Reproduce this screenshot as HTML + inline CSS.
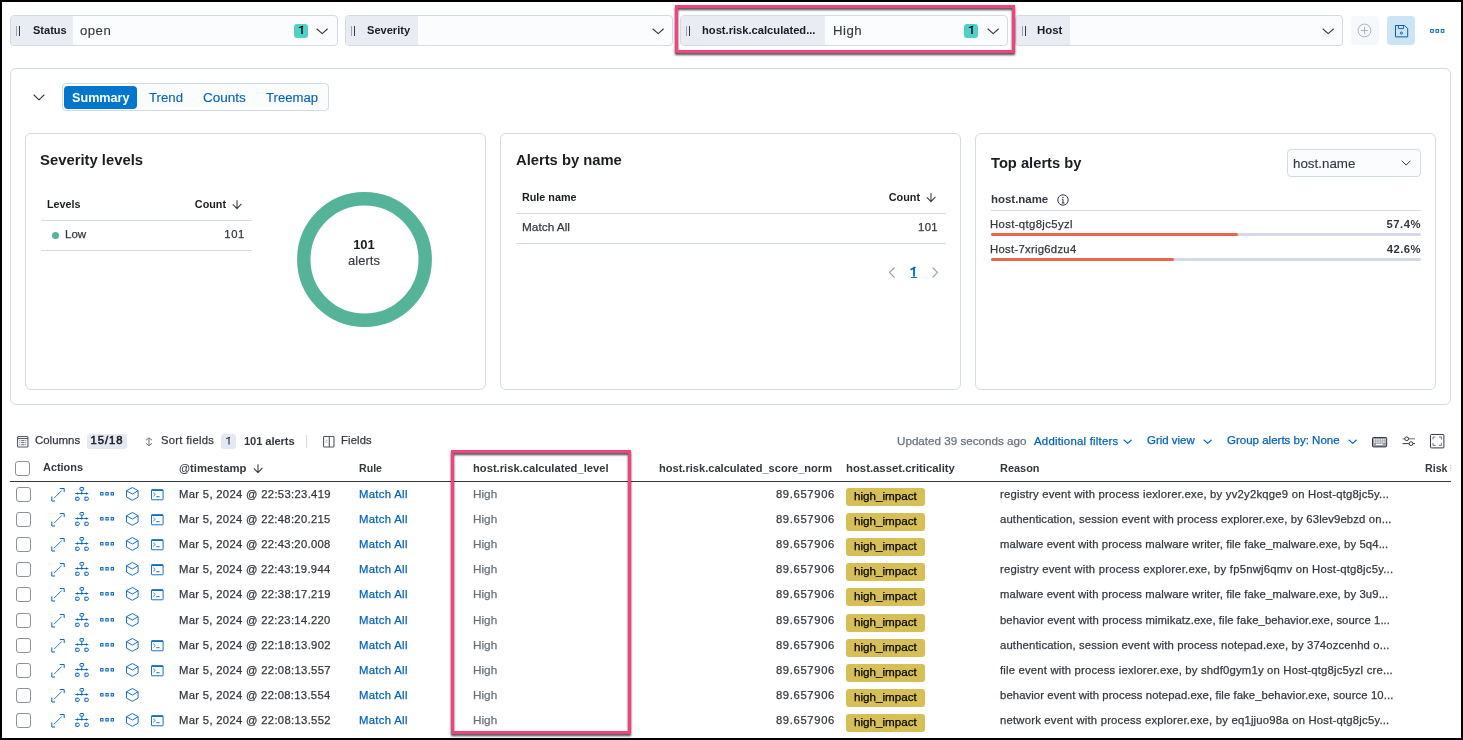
<!DOCTYPE html>
<html><head><meta charset="utf-8"><style>
html,body{margin:0;padding:0;}
body{width:1463px;height:740px;background:#000;position:relative;overflow:hidden;font-family:"Liberation Sans", sans-serif;}
.t{position:absolute;white-space:nowrap;will-change:transform;}
.a{position:absolute;}
svg.a{overflow:visible;}
</style></head><body>
<div style="position:absolute;left:2px;top:2px;width:1459px;height:735.6px;background:#fff"></div>
<div class="a" style="left:10px;top:15px;width:328px;height:31px;background:#fbfcfd;border:1px solid #d3dae6;box-sizing:border-box;border-radius:4px;"></div>
<div class="a" style="left:11px;top:16px;width:62px;height:29px;background:#e9edf3;border-radius:3px 0 0 3px;"></div>
<div class="a" style="left:16.3px;top:26px;width:1px;height:10px;background:#98a2b3;"></div>
<div class="a" style="left:19.3px;top:26px;width:1px;height:10px;background:#343741;"></div>
<div class="t" style="top:24.00px;font-size:11.067px;line-height:13.28px;font-weight:700;color:#1a1c21;left:32.58px;">Status</div>
<div class="t" style="top:23.00px;font-size:13.2px;line-height:15.84px;font-weight:400;color:#343741;-webkit-text-stroke:0.125px #343741;letter-spacing:0.468px;left:80.27px;">open</div>
<div class="a" style="left:294px;top:24px;width:14px;height:14px;background:#4fd1c8;border-radius:3px;"></div>
<svg class="a" style="left:296.9px;top:25.2px;" width="10" height="9.900000000000002" viewBox="0 0 10 9.900000000000002"><path d="M5 1V8.900000000000002" stroke="#000" stroke-width="1.35" stroke-linecap="butt"/><path d="M5.675 1.4L2.3 2.5" stroke="#000" stroke-width="1.215" stroke-linecap="round"/></svg>
<svg class="a" style="left:315.05px;top:26.599999999999998px;" width="14.4" height="8.6" viewBox="0 0 14.4 8.6"><path d="M2 2 L7.2 6.6 L12.4 2" fill="none" stroke="#343741" stroke-width="1.1" stroke-linecap="round" stroke-linejoin="round"/></svg>
<div class="a" style="left:345px;top:15px;width:327.70000000000005px;height:31px;background:#fbfcfd;border:1px solid #d3dae6;box-sizing:border-box;border-radius:4px;"></div>
<div class="a" style="left:346px;top:16px;width:72px;height:29px;background:#e9edf3;border-radius:3px 0 0 3px;"></div>
<div class="a" style="left:351.3px;top:26px;width:1px;height:10px;background:#98a2b3;"></div>
<div class="a" style="left:354.3px;top:26px;width:1px;height:10px;background:#343741;"></div>
<div class="t" style="top:24.00px;font-size:11.095px;line-height:13.31px;font-weight:700;color:#1a1c21;left:367.08px;">Severity</div>
<svg class="a" style="left:651.05px;top:26.599999999999998px;" width="14.4" height="8.6" viewBox="0 0 14.4 8.6"><path d="M2 2 L7.2 6.6 L12.4 2" fill="none" stroke="#343741" stroke-width="1.1" stroke-linecap="round" stroke-linejoin="round"/></svg>
<div class="a" style="left:680px;top:15px;width:327.70000000000005px;height:31px;background:#fbfcfd;border:1px solid #d3dae6;box-sizing:border-box;border-radius:4px;"></div>
<div class="a" style="left:681px;top:16px;width:144.39999999999998px;height:29px;background:#e9edf3;border-radius:3px 0 0 3px;"></div>
<div class="a" style="left:686.3px;top:26px;width:1px;height:10px;background:#98a2b3;"></div>
<div class="a" style="left:689.3px;top:26px;width:1px;height:10px;background:#343741;"></div>
<div class="t" style="top:24.00px;font-size:11.162px;line-height:13.39px;font-weight:700;color:#1a1c21;left:701.73px;">host.risk.calculated...</div>
<div class="t" style="top:23.00px;font-size:13.2px;line-height:15.84px;font-weight:400;color:#343741;-webkit-text-stroke:0.125px #343741;letter-spacing:0.483px;left:832.54px;">High</div>
<div class="a" style="left:964px;top:24px;width:14px;height:14px;background:#4fd1c8;border-radius:3px;"></div>
<svg class="a" style="left:966.9px;top:25.2px;" width="10" height="9.900000000000002" viewBox="0 0 10 9.900000000000002"><path d="M5 1V8.900000000000002" stroke="#000" stroke-width="1.35" stroke-linecap="butt"/><path d="M5.675 1.4L2.3 2.5" stroke="#000" stroke-width="1.215" stroke-linecap="round"/></svg>
<svg class="a" style="left:986.0px;top:26.599999999999998px;" width="14.4" height="8.6" viewBox="0 0 14.4 8.6"><path d="M2 2 L7.2 6.6 L12.4 2" fill="none" stroke="#343741" stroke-width="1.1" stroke-linecap="round" stroke-linejoin="round"/></svg>
<div class="a" style="left:1015.4px;top:15px;width:327.6px;height:31px;background:#fbfcfd;border:1px solid #d3dae6;box-sizing:border-box;border-radius:4px;"></div>
<div class="a" style="left:1016.4px;top:16px;width:53.60000000000002px;height:29px;background:#e9edf3;border-radius:3px 0 0 3px;"></div>
<div class="a" style="left:1021.6999999999999px;top:26px;width:1px;height:10px;background:#98a2b3;"></div>
<div class="a" style="left:1024.6999999999998px;top:26px;width:1px;height:10px;background:#343741;"></div>
<div class="t" style="top:24.00px;font-size:11.44px;line-height:13.73px;font-weight:700;color:#1a1c21;left:1037.21px;">Host</div>
<svg class="a" style="left:1320.5px;top:26.599999999999998px;" width="14.4" height="8.6" viewBox="0 0 14.4 8.6"><path d="M2 2 L7.2 6.6 L12.4 2" fill="none" stroke="#343741" stroke-width="1.1" stroke-linecap="round" stroke-linejoin="round"/></svg>
<div class="a" style="left:1351px;top:16px;width:28px;height:28.5px;background:#f7f8fc;border-radius:4px;"></div>
<svg class="a" style="left:1357.2px;top:23.2px;" width="15" height="15" viewBox="0 0 15 15"><circle cx="7.5" cy="7.5" r="6.4" fill="none" stroke="#a2abba" stroke-width="0.9"/><path d="M7.5 3.9V11.1M3.9 7.5H11.1" stroke="#a2abba" stroke-width="0.9"/></svg>
<div class="a" style="left:1387px;top:16px;width:28px;height:28.5px;background:#cce4f5;border-radius:4px;"></div>
<svg class="a" style="left:1395px;top:25px;" width="13.2" height="12.4" viewBox="0 0 13.2 12.4"><path d="M0.5 0.5H9.6L12.7 3.6V11.9H0.5Z" fill="none" stroke="#0061a6" stroke-width="1" stroke-linejoin="round"/><path d="M3.4 0.5V3.6H8.6V0.5" fill="none" stroke="#0061a6" stroke-width="0.9"/><circle cx="6.4" cy="8.1" r="1.1" fill="none" stroke="#0061a6" stroke-width="0.9"/></svg>
<svg class="a" style="left:1429.6px;top:29.1px;" width="14.5" height="3.9" viewBox="0 0 14.5 3.9"><rect x="0.6" y="0.6" width="2.7" height="2.7" fill="none" stroke="#0061a6" stroke-width="0.95"/><rect x="5.8999999999999995" y="0.6" width="2.7" height="2.7" fill="none" stroke="#0061a6" stroke-width="0.95"/><rect x="11.2" y="0.6" width="2.7" height="2.7" fill="none" stroke="#0061a6" stroke-width="0.95"/></svg>
<div class="a" style="left:10px;top:68px;width:1441px;height:337px;background:#fff;border:1px solid #d3dae6;box-sizing:border-box;border-radius:6px;"></div>
<svg class="a" style="left:32.3px;top:92.6px;" width="14" height="8.8" viewBox="0 0 14 8.8"><path d="M2 2 L7.0 6.8 L12 2" fill="none" stroke="#343741" stroke-width="1.1" stroke-linecap="round" stroke-linejoin="round"/></svg>
<div class="a" style="left:61.5px;top:83.2px;width:267.4px;height:28.3px;background:#fbfcfd;border:1px solid #d3dae6;box-sizing:border-box;border-radius:4px;"></div>
<div class="a" style="left:64.2px;top:86.1px;width:72.8px;height:22.8px;background:#0077cc;border-radius:4px;"></div>
<div class="t" style="top:91.00px;font-size:12.639px;line-height:15.17px;font-weight:700;color:#fff;left:71.65px;">Summary</div>
<div class="t" style="top:90.00px;font-size:13.205px;line-height:15.85px;font-weight:400;color:#0062bd;-webkit-text-stroke:0.125px #0062bd;left:149.34px;">Trend</div>
<div class="t" style="top:90.00px;font-size:13.534px;line-height:16.24px;font-weight:400;color:#0062bd;-webkit-text-stroke:0.125px #0062bd;left:202.82px;">Counts</div>
<div class="t" style="top:90.00px;font-size:13.126px;line-height:15.75px;font-weight:400;color:#0062bd;-webkit-text-stroke:0.125px #0062bd;left:266.44px;">Treemap</div>
<div class="a" style="left:25px;top:133px;width:460.5px;height:256.5px;background:#fff;border:1px solid #d3dae6;box-sizing:border-box;border-radius:6px;"></div>
<div class="a" style="left:500px;top:133px;width:460.5px;height:256.5px;background:#fff;border:1px solid #d3dae6;box-sizing:border-box;border-radius:6px;"></div>
<div class="a" style="left:975px;top:133px;width:460.5px;height:256.5px;background:#fff;border:1px solid #d3dae6;box-sizing:border-box;border-radius:6px;"></div>
<div class="t" style="top:152.00px;font-size:14.84px;line-height:17.81px;font-weight:700;color:#1a1c21;left:40.40px;">Severity levels</div>
<div class="t" style="top:198.00px;font-size:10.772px;line-height:12.93px;font-weight:700;color:#1a1c21;left:47.45px;">Levels</div>
<div class="t" style="top:198.00px;font-size:10.792px;line-height:12.95px;font-weight:700;color:#1a1c21;left:-773.57px;width:1000px;text-align:right;">Count</div>
<svg class="a" style="left:231.7px;top:199.5px;" width="10" height="10" viewBox="0 0 10 10"><path d="M5 0.3V8.4M0.8 4.4L5 8.6L9.4 3.9" fill="none" stroke="#343741" stroke-width="1.05" stroke-linejoin="round"/></svg>
<div class="a" style="left:41px;top:220px;width:211px;height:1px;background:#d3dae6;"></div>
<div class="a" style="left:51.6px;top:231.5px;width:7.2px;height:7.2px;background:#54b399;border-radius:4px;"></div>
<div class="t" style="top:228.00px;font-size:11.576px;line-height:13.89px;font-weight:400;color:#343741;-webkit-text-stroke:0.25px #343741;left:65.07px;">Low</div>
<div class="t" style="top:228.00px;font-size:11.3px;line-height:13.56px;font-weight:400;color:#343741;-webkit-text-stroke:0.25px #343741;letter-spacing:0.629px;left:-755.35px;width:1000px;text-align:right;">101</div>
<div class="a" style="left:41px;top:250px;width:211px;height:1px;background:#d3dae6;"></div>
<svg class="a" style="left:297px;top:192.4px;" width="135" height="135" viewBox="0 0 135 135"><circle cx="67.5" cy="67.5" r="60.7" fill="none" stroke="#54b399" stroke-width="13.4"/></svg>
<div class="t" style="top:237.00px;font-size:13px;line-height:15.6px;font-weight:700;color:#1a1c21;left:-135.60000000000002px;width:1000px;text-align:center;">101</div>
<div class="t" style="top:253.00px;font-size:13px;line-height:15.6px;font-weight:400;color:#343741;-webkit-text-stroke:0.125px #343741;left:-135.60000000000002px;width:1000px;text-align:center;">alerts</div>
<div class="t" style="top:152.00px;font-size:14.768px;line-height:17.72px;font-weight:700;color:#1a1c21;left:515.90px;">Alerts by name</div>
<div class="t" style="top:191.00px;font-size:10.783px;line-height:12.94px;font-weight:700;color:#1a1c21;left:522.45px;">Rule name</div>
<div class="t" style="top:191.00px;font-size:10.827px;line-height:12.99px;font-weight:700;color:#1a1c21;left:-80.17px;width:1000px;text-align:right;">Count</div>
<svg class="a" style="left:926px;top:192.8px;" width="10" height="10" viewBox="0 0 10 10"><path d="M5 0.3V8.4M0.8 4.4L5 8.6L9.4 3.9" fill="none" stroke="#343741" stroke-width="1.05" stroke-linejoin="round"/></svg>
<div class="a" style="left:516px;top:213px;width:430px;height:1px;background:#d3dae6;"></div>
<div class="t" style="top:220.00px;font-size:11.838px;line-height:14.21px;font-weight:400;color:#343741;-webkit-text-stroke:0.25px #343741;left:522.05px;">Match All</div>
<div class="t" style="top:221.00px;font-size:11.3px;line-height:13.56px;font-weight:400;color:#343741;-webkit-text-stroke:0.25px #343741;letter-spacing:0.379px;left:-62.10px;width:1000px;text-align:right;">101</div>
<div class="a" style="left:516px;top:243px;width:430px;height:1px;background:#d3dae6;"></div>
<svg class="a" style="left:887px;top:266px;" width="10" height="13" viewBox="0 0 10 13"><path d="M7.5 1.5L2.5 6.5L7.5 11.5" fill="none" stroke="#98a2b3" stroke-width="1.1"/></svg>
<svg class="a" style="left:909.1px;top:265.6px;" width="10" height="11.599999999999966" viewBox="0 0 10 11.599999999999966"><path d="M5 1V10.599999999999966" stroke="#0a6ec6" stroke-width="1.9" stroke-linecap="butt"/><path d="M5.95 1.4L2.0 3.4" stroke="#0a6ec6" stroke-width="1.71" stroke-linecap="round"/></svg>
<div class="a" style="left:910.8px;top:277px;width:6.2px;height:1.1px;background:#0a6ec6;"></div>
<svg class="a" style="left:930px;top:266px;" width="10" height="13" viewBox="0 0 10 13"><path d="M2.5 1.5L7.5 6.5L2.5 11.5" fill="none" stroke="#98a2b3" stroke-width="1.1"/></svg>
<div class="t" style="top:155.00px;font-size:14.715px;line-height:17.66px;font-weight:700;color:#1a1c21;left:991.05px;">Top alerts by</div>
<div class="a" style="left:1286.5px;top:149.2px;width:134.3px;height:28.3px;background:#fbfcfd;border:1px solid #d3dae6;box-sizing:border-box;border-radius:4px;"></div>
<div class="t" style="top:156.00px;font-size:13.36px;line-height:16.03px;font-weight:400;color:#343741;-webkit-text-stroke:0.125px #343741;left:1292.50px;">host.name</div>
<svg class="a" style="left:1400.2px;top:159.14999999999998px;" width="12.2" height="8.1" viewBox="0 0 12.2 8.1"><path d="M2 2 L6.1 6.1 L10.2 2" fill="none" stroke="#343741" stroke-width="1.0" stroke-linecap="round" stroke-linejoin="round"/></svg>
<div class="t" style="top:193.00px;font-size:11.455px;line-height:13.75px;font-weight:700;color:#343741;left:990.51px;">host.name</div>
<svg class="a" style="left:1056.5px;top:193.5px;" width="12" height="12" viewBox="0 0 12 12"><circle cx="6" cy="6" r="5.2" fill="none" stroke="#343741" stroke-width="1"/><path d="M6 5.2V9M4.8 9H7.4M4.9 5.2H6" fill="none" stroke="#343741" stroke-width="1"/><circle cx="6" cy="3.4" r="0.7" fill="#343741"/></svg>
<div class="a" style="left:991px;top:210px;width:429.8px;height:1px;background:#d3dae6;"></div>
<div class="t" style="top:218.00px;font-size:11.3px;line-height:13.56px;font-weight:400;color:#343741;-webkit-text-stroke:0.25px #343741;letter-spacing:0.376px;left:990.30px;">Host-qtg8jc5yzl</div>
<div class="t" style="top:218.00px;font-size:11.3px;line-height:13.56px;font-weight:700;color:#343741;letter-spacing:0.479px;left:420.70px;width:1000px;text-align:right;">57.4%</div>
<div class="a" style="left:991px;top:232.8px;width:429.8px;height:3.2px;background:#d3dae6;border-radius:2px;"></div>
<div class="a" style="left:991px;top:232.8px;width:247px;height:3.2px;background:#e7664c;border-radius:2px;"></div>
<div class="t" style="top:243.00px;font-size:11.3px;line-height:13.56px;font-weight:400;color:#343741;-webkit-text-stroke:0.25px #343741;letter-spacing:0.28px;left:990.30px;">Host-7xrig6dzu4</div>
<div class="t" style="top:243.00px;font-size:11.3px;line-height:13.56px;font-weight:700;color:#343741;letter-spacing:0.422px;left:420.64px;width:1000px;text-align:right;">42.6%</div>
<div class="a" style="left:991px;top:257.9px;width:429.8px;height:3.2px;background:#d3dae6;border-radius:2px;"></div>
<div class="a" style="left:991px;top:257.9px;width:183px;height:3.2px;background:#e7664c;border-radius:2px;"></div>
<svg class="a" style="left:16.7px;top:435.8px;" width="11.5" height="11.5" viewBox="0 0 11.5 11.5"><rect x="0.55" y="0.55" width="10.4" height="10.4" rx="1" fill="none" stroke="#535966" stroke-width="1.1"/><path d="M0.5 2.5H11" stroke="#535966" stroke-width="1.1"/><path d="M2.4 4.6H9.2M2.4 6.6H9.2M2.4 8.7H9.2" stroke="#535966" stroke-width="0.9" stroke-dasharray="0.9 0.9 3.2 0.9"/></svg>
<div class="t" style="top:434.00px;font-size:11.459px;line-height:13.75px;font-weight:400;color:#343741;-webkit-text-stroke:0.25px #343741;left:35.13px;">Columns</div>
<div class="a" style="left:87.3px;top:433.9px;width:39.4px;height:14.7px;background:#e3e8f2;border-radius:3px;"></div>
<div class="t" style="top:434.00px;font-size:11.2px;line-height:13.44px;font-weight:400;color:#1a1c21;-webkit-text-stroke:0.55px #1a1c21;letter-spacing:1.015px;left:-393px;width:1000px;text-align:center;">15/18</div>
<svg class="a" style="left:144.5px;top:436.8px;" width="8" height="9.5" viewBox="0 0 8 9.5"><path d="M1 3.2L4 0.8L7 3.2M1 6.3L4 8.7L7 6.3M4 1.2V8.3" fill="none" stroke="#69707d" stroke-width="1"/></svg>
<div class="t" style="top:434.00px;font-size:11.2px;line-height:13.44px;font-weight:400;color:#343741;-webkit-text-stroke:0.25px #343741;letter-spacing:0.309px;left:161.15px;">Sort fields</div>
<div class="a" style="left:221.4px;top:433.9px;width:14.2px;height:14.7px;background:#e3e8f2;border-radius:3px;"></div>
<svg class="a" style="left:224px;top:436.3px;" width="10" height="9.5" viewBox="0 0 10 9.5"><path d="M5 1V8.5" stroke="#343741" stroke-width="1.15" stroke-linecap="butt"/><path d="M5.575 1.4L2.6 2.5" stroke="#343741" stroke-width="1.035" stroke-linecap="round"/></svg>
<div class="t" style="top:435.00px;font-size:11.2px;line-height:13.44px;font-weight:700;color:#343741;letter-spacing:-0.112px;left:244.13px;">101 alerts</div>
<div class="a" style="left:306px;top:435px;width:1px;height:13px;background:#d3dae6;"></div>
<svg class="a" style="left:322.7px;top:435.8px;" width="11.5" height="11.5" viewBox="0 0 11.5 11.5"><rect x="0.55" y="0.55" width="10.4" height="10.4" rx="0.8" fill="none" stroke="#535966" stroke-width="1.1"/><path d="M6.3 0.5V11" stroke="#535966" stroke-width="1.1"/><path d="M2.5 4.3H4.6M2.5 6.3H4.6" stroke="#a0a5ad" stroke-width="0.8"/></svg>
<div class="t" style="top:434.00px;font-size:11.2px;line-height:13.44px;font-weight:400;color:#343741;-webkit-text-stroke:0.25px #343741;letter-spacing:0.171px;left:340.60px;">Fields</div>
<div class="t" style="top:434.00px;font-size:11.658px;line-height:13.99px;font-weight:400;color:#69707d;-webkit-text-stroke:0.25px #69707d;left:896.98px;">Updated 39 seconds ago</div>
<div class="t" style="top:435.00px;font-size:11.4px;line-height:13.68px;font-weight:400;color:#0062bd;-webkit-text-stroke:0.25px #0062bd;letter-spacing:0.228px;left:1034.00px;">Additional filters</div>
<svg class="a" style="left:1121.6px;top:438.1px;" width="11.4" height="7.4" viewBox="0 0 11.4 7.4"><path d="M2 2 L5.7 5.4 L9.4 2" fill="none" stroke="#0062bd" stroke-width="1.05" stroke-linecap="round" stroke-linejoin="round"/></svg>
<div class="t" style="top:434.00px;font-size:11.442px;line-height:13.73px;font-weight:400;color:#0062bd;-webkit-text-stroke:0.25px #0062bd;left:1146.73px;">Grid view</div>
<svg class="a" style="left:1201.5px;top:437.8px;" width="11.4" height="7.4" viewBox="0 0 11.4 7.4"><path d="M2 2 L5.7 5.4 L9.4 2" fill="none" stroke="#0062bd" stroke-width="1.05" stroke-linecap="round" stroke-linejoin="round"/></svg>
<div class="t" style="top:434.00px;font-size:11.52px;line-height:13.82px;font-weight:400;color:#0062bd;-webkit-text-stroke:0.25px #0062bd;left:1227.12px;">Group alerts by: None</div>
<svg class="a" style="left:1346.8px;top:437.8px;" width="11.4" height="7.4" viewBox="0 0 11.4 7.4"><path d="M2 2 L5.7 5.4 L9.4 2" fill="none" stroke="#0062bd" stroke-width="1.05" stroke-linecap="round" stroke-linejoin="round"/></svg>
<svg class="a" style="left:1371.7px;top:436.5px;" width="15.2" height="10.4" viewBox="0 0 15.2 10.4"><rect x="0.5" y="0.5" width="14.2" height="9.4" rx="0.8" fill="#9aa0aa" stroke="#343741" stroke-width="1"/><rect x="2.00" y="2.2" width="1.1" height="1.3" fill="#fff"/><rect x="3.75" y="2.2" width="1.1" height="1.3" fill="#fff"/><rect x="5.50" y="2.2" width="1.1" height="1.3" fill="#fff"/><rect x="7.25" y="2.2" width="1.1" height="1.3" fill="#fff"/><rect x="9.00" y="2.2" width="1.1" height="1.3" fill="#fff"/><rect x="10.75" y="2.2" width="1.1" height="1.3" fill="#fff"/><rect x="12.50" y="2.2" width="1.1" height="1.3" fill="#fff"/><rect x="2.00" y="4.4" width="1.1" height="1.3" fill="#fff"/><rect x="3.75" y="4.4" width="1.1" height="1.3" fill="#fff"/><rect x="5.50" y="4.4" width="1.1" height="1.3" fill="#fff"/><rect x="7.25" y="4.4" width="1.1" height="1.3" fill="#fff"/><rect x="9.00" y="4.4" width="1.1" height="1.3" fill="#fff"/><rect x="10.75" y="4.4" width="1.1" height="1.3" fill="#fff"/><rect x="12.50" y="4.4" width="1.1" height="1.3" fill="#fff"/><rect x="4" y="6.8" width="6.8" height="1.2" fill="#fff"/></svg>
<svg class="a" style="left:1401.5px;top:435.8px;" width="13.5" height="10" viewBox="0 0 13.5 10"><path d="M0.5 2.8H13" stroke="#69707d" stroke-width="1"/><path d="M0.5 7.6H13" stroke="#343741" stroke-width="1"/><circle cx="4.7" cy="2.8" r="1.9" fill="#fff" stroke="#343741" stroke-width="1"/><circle cx="9" cy="7.6" r="1.9" fill="#fff" stroke="#343741" stroke-width="1"/></svg>
<svg class="a" style="left:1429.7px;top:433.8px;" width="14.4" height="14.4" viewBox="0 0 14.4 14.4"><rect x="0.5" y="0.5" width="13.4" height="13.4" rx="0.8" fill="none" stroke="#343741" stroke-width="1"/><path d="M3 5.5V3H5.5M8.9 3H11.4V5.5M11.4 8.9V11.4H8.9M5.5 11.4H3V8.9" fill="none" stroke="#69707d" stroke-width="1"/></svg>
<div class="a" style="left:15.2px;top:461.3px;width:14.5px;height:14.5px;background:#fff;border:1px solid #8c919b;box-sizing:border-box;border-radius:3px;"></div>
<div class="t" style="top:461.00px;font-size:10.912px;line-height:13.09px;font-weight:700;color:#343741;left:42.88px;">Actions</div>
<div class="t" style="top:462.00px;font-size:11.316px;line-height:13.58px;font-weight:700;color:#343741;left:179.03px;">@timestamp</div>
<svg class="a" style="left:253px;top:463.7px;" width="10" height="10" viewBox="0 0 10 10"><path d="M5 0.3V8.4M0.8 4.4L5 8.6L9.4 3.9" fill="none" stroke="#343741" stroke-width="1.05" stroke-linejoin="round"/></svg>
<div class="t" style="top:462.00px;font-size:10.621px;line-height:12.75px;font-weight:700;color:#343741;left:359.06px;">Rule</div>
<div class="t" style="top:462.00px;font-size:11.202px;line-height:13.44px;font-weight:700;color:#343741;left:473.13px;">host.risk.calculated_level</div>
<div class="t" style="top:462.00px;font-size:11.098px;line-height:13.32px;font-weight:700;color:#343741;left:-168.14px;width:1000px;text-align:right;">host.risk.calculated_score_norm</div>
<div class="t" style="top:462.00px;font-size:11.33px;line-height:13.6px;font-weight:700;color:#343741;left:845.52px;">host.asset.criticality</div>
<div class="t" style="top:462.00px;font-size:10.941px;line-height:13.13px;font-weight:700;color:#343741;left:999.64px;">Reason</div>
<div class="t" style="top:462.00px;font-size:10.651px;line-height:12.78px;font-weight:700;color:#343741;left:1424.66px;">Risk</div>
<svg class="a" style="left:1449.8px;top:465px;" width="1.5" height="6" viewBox="0 0 1.5 6"><path d="M0.75 0V6" stroke="#b8bdc6" stroke-width="1" stroke-dasharray="1.6 1"/></svg>
<div class="a" style="left:10px;top:480.6px;width:1440.7px;height:1.5px;background:#343741;"></div>
<div class="a" style="left:16.2px;top:487.1px;width:14.5px;height:14.5px;background:#fff;border:1px solid #8c919b;box-sizing:border-box;border-radius:3px;"></div>
<svg class="a" style="left:50.5px;top:487.5px;" width="14" height="14" viewBox="0 0 14 14"><path d="M3 10.2L10.7 2.5" fill="none" stroke="#0062bd" stroke-width="0.85"/><path d="M8.8 0.55H13.2V4M0.8 8.5V13H4.1" fill="none" stroke="#0062bd" stroke-width="1"/></svg>
<svg class="a" style="left:74.8px;top:487px;" width="14" height="14" viewBox="0 0 14 14"><rect x="5" y="0.5" width="3.6" height="2.7" rx="0.6" fill="none" stroke="#0062bd" stroke-width="1"/><path d="M6.8 3.4V6.5M0.3 6.5H13.3" stroke="#0062bd" stroke-width="0.85"/><path d="M1.2 6.5L2.5 5.3L3.8 6.5L2.5 7.7Z" fill="#0062bd"/><path d="M5.5 6.5L6.8 5.3L8.1 6.5L6.8 7.7Z" fill="#0062bd"/><path d="M10.1 6.5L11.4 5.3L12.700000000000001 6.5L11.4 7.7Z" fill="#0062bd"/><path d="M0.8 10.2H3.6L4.4 11.7L3.6 13.3H0.8Z" fill="none" stroke="#0062bd" stroke-width="1"/><path d="M9.9 10.2H12.7L13.5 11.7L12.7 13.3H9.9Z" fill="none" stroke="#0062bd" stroke-width="1"/></svg>
<svg class="a" style="left:100px;top:492.1px;" width="14.1" height="3.6" viewBox="0 0 14.1 3.6"><rect x="0.6" y="0.6" width="2.4000000000000004" height="2.4000000000000004" fill="none" stroke="#0062bd" stroke-width="1.0"/><rect x="5.85" y="0.6" width="2.4000000000000004" height="2.4000000000000004" fill="none" stroke="#0062bd" stroke-width="1.0"/><rect x="11.1" y="0.6" width="2.4000000000000004" height="2.4000000000000004" fill="none" stroke="#0062bd" stroke-width="1.0"/></svg>
<svg class="a" style="left:125.9px;top:487px;" width="13" height="14" viewBox="0 0 13 14"><path d="M6.4 0.5L12.1 3.7V10.2L6.3 13.3L0.5 10.1V3.7Z M0.5 3.7L6.3 7.1L12.1 3.7" fill="none" stroke="#0062bd" stroke-width="0.9" stroke-linejoin="round"/></svg>
<svg class="a" style="left:151px;top:488.6px;" width="12.6" height="11.3" viewBox="0 0 12.6 11.3"><rect x="0.5" y="0.8" width="11.6" height="10" rx="0.6" fill="none" stroke="#0062bd" stroke-width="0.9"/><path d="M0.5 1.2H12.1" stroke="#0062bd" stroke-width="1.4"/><path d="M2.3 3.7L4.3 5.5L2.3 7.3" fill="none" stroke="#0062bd" stroke-width="0.75"/><path d="M5.3 7.7H8.6" stroke="#0062bd" stroke-width="0.9"/></svg>
<div class="t" style="top:488.00px;font-size:11.26px;line-height:13.51px;font-weight:400;color:#343741;-webkit-text-stroke:0.25px #343741;letter-spacing:0.324px;left:178.90px;">Mar 5, 2024 @ 22:53:23.419</div>
<div class="t" style="top:488.00px;font-size:11.3px;line-height:13.56px;font-weight:400;color:#0062bd;-webkit-text-stroke:0.25px #0062bd;letter-spacing:0.33px;left:358.80px;">Match All</div>
<div class="t" style="top:487.00px;font-size:11.768px;line-height:14.12px;font-weight:400;color:#69707d;-webkit-text-stroke:0.25px #69707d;left:472.86px;">High</div>
<div class="t" style="top:488.00px;font-size:11.26px;line-height:13.51px;font-weight:400;color:#343741;-webkit-text-stroke:0.25px #343741;letter-spacing:0.654px;left:-165.34px;width:1000px;text-align:right;">89.657906</div>
<div class="a" style="left:846px;top:488px;width:78.9px;height:17.8px;background:#d6bf57;border-radius:3px;"></div>
<div class="t" style="top:489.00px;font-size:11.642px;line-height:13.97px;font-weight:400;color:#000;-webkit-text-stroke:0.25px #000;left:854.10px;">high_impact</div>
<div class="t" style="top:488.00px;font-size:11.3px;line-height:13.56px;font-weight:400;color:#343741;-webkit-text-stroke:0.25px #343741;letter-spacing:0.219px;left:999.62px;">registry event with process iexlorer.exe, by yv2y2kqge9 on Host-qtg8jc5y...</div>
<div class="a" style="left:16.2px;top:512.1px;width:14.5px;height:14.5px;background:#fff;border:1px solid #8c919b;box-sizing:border-box;border-radius:3px;"></div>
<svg class="a" style="left:50.5px;top:512.5px;" width="14" height="14" viewBox="0 0 14 14"><path d="M3 10.2L10.7 2.5" fill="none" stroke="#0062bd" stroke-width="0.85"/><path d="M8.8 0.55H13.2V4M0.8 8.5V13H4.1" fill="none" stroke="#0062bd" stroke-width="1"/></svg>
<svg class="a" style="left:74.8px;top:512px;" width="14" height="14" viewBox="0 0 14 14"><rect x="5" y="0.5" width="3.6" height="2.7" rx="0.6" fill="none" stroke="#0062bd" stroke-width="1"/><path d="M6.8 3.4V6.5M0.3 6.5H13.3" stroke="#0062bd" stroke-width="0.85"/><path d="M1.2 6.5L2.5 5.3L3.8 6.5L2.5 7.7Z" fill="#0062bd"/><path d="M5.5 6.5L6.8 5.3L8.1 6.5L6.8 7.7Z" fill="#0062bd"/><path d="M10.1 6.5L11.4 5.3L12.700000000000001 6.5L11.4 7.7Z" fill="#0062bd"/><path d="M0.8 10.2H3.6L4.4 11.7L3.6 13.3H0.8Z" fill="none" stroke="#0062bd" stroke-width="1"/><path d="M9.9 10.2H12.7L13.5 11.7L12.7 13.3H9.9Z" fill="none" stroke="#0062bd" stroke-width="1"/></svg>
<svg class="a" style="left:100px;top:517.1px;" width="14.1" height="3.6" viewBox="0 0 14.1 3.6"><rect x="0.6" y="0.6" width="2.4000000000000004" height="2.4000000000000004" fill="none" stroke="#0062bd" stroke-width="1.0"/><rect x="5.85" y="0.6" width="2.4000000000000004" height="2.4000000000000004" fill="none" stroke="#0062bd" stroke-width="1.0"/><rect x="11.1" y="0.6" width="2.4000000000000004" height="2.4000000000000004" fill="none" stroke="#0062bd" stroke-width="1.0"/></svg>
<svg class="a" style="left:125.9px;top:512px;" width="13" height="14" viewBox="0 0 13 14"><path d="M6.4 0.5L12.1 3.7V10.2L6.3 13.3L0.5 10.1V3.7Z M0.5 3.7L6.3 7.1L12.1 3.7" fill="none" stroke="#0062bd" stroke-width="0.9" stroke-linejoin="round"/></svg>
<svg class="a" style="left:151px;top:513.6px;" width="12.6" height="11.3" viewBox="0 0 12.6 11.3"><rect x="0.5" y="0.8" width="11.6" height="10" rx="0.6" fill="none" stroke="#0062bd" stroke-width="0.9"/><path d="M0.5 1.2H12.1" stroke="#0062bd" stroke-width="1.4"/><path d="M2.3 3.7L4.3 5.5L2.3 7.3" fill="none" stroke="#0062bd" stroke-width="0.75"/><path d="M5.3 7.7H8.6" stroke="#0062bd" stroke-width="0.9"/></svg>
<div class="t" style="top:513.00px;font-size:11.26px;line-height:13.51px;font-weight:400;color:#343741;-webkit-text-stroke:0.25px #343741;letter-spacing:0.319px;left:178.90px;">Mar 5, 2024 @ 22:48:20.215</div>
<div class="t" style="top:513.00px;font-size:11.3px;line-height:13.56px;font-weight:400;color:#0062bd;-webkit-text-stroke:0.25px #0062bd;letter-spacing:0.33px;left:358.80px;">Match All</div>
<div class="t" style="top:512.00px;font-size:11.768px;line-height:14.12px;font-weight:400;color:#69707d;-webkit-text-stroke:0.25px #69707d;left:472.86px;">High</div>
<div class="t" style="top:513.00px;font-size:11.26px;line-height:13.51px;font-weight:400;color:#343741;-webkit-text-stroke:0.25px #343741;letter-spacing:0.654px;left:-165.34px;width:1000px;text-align:right;">89.657906</div>
<div class="a" style="left:846px;top:513px;width:78.9px;height:17.8px;background:#d6bf57;border-radius:3px;"></div>
<div class="t" style="top:514.00px;font-size:11.642px;line-height:13.97px;font-weight:400;color:#000;-webkit-text-stroke:0.25px #000;left:854.10px;">high_impact</div>
<div class="t" style="top:513.00px;font-size:11.3px;line-height:13.56px;font-weight:400;color:#343741;-webkit-text-stroke:0.25px #343741;letter-spacing:0.144px;left:999.85px;">authentication, session event with process explorer.exe, by 63lev9ebzd on...</div>
<div class="a" style="left:16.2px;top:537.1px;width:14.5px;height:14.5px;background:#fff;border:1px solid #8c919b;box-sizing:border-box;border-radius:3px;"></div>
<svg class="a" style="left:50.5px;top:537.5px;" width="14" height="14" viewBox="0 0 14 14"><path d="M3 10.2L10.7 2.5" fill="none" stroke="#0062bd" stroke-width="0.85"/><path d="M8.8 0.55H13.2V4M0.8 8.5V13H4.1" fill="none" stroke="#0062bd" stroke-width="1"/></svg>
<svg class="a" style="left:74.8px;top:537px;" width="14" height="14" viewBox="0 0 14 14"><rect x="5" y="0.5" width="3.6" height="2.7" rx="0.6" fill="none" stroke="#0062bd" stroke-width="1"/><path d="M6.8 3.4V6.5M0.3 6.5H13.3" stroke="#0062bd" stroke-width="0.85"/><path d="M1.2 6.5L2.5 5.3L3.8 6.5L2.5 7.7Z" fill="#0062bd"/><path d="M5.5 6.5L6.8 5.3L8.1 6.5L6.8 7.7Z" fill="#0062bd"/><path d="M10.1 6.5L11.4 5.3L12.700000000000001 6.5L11.4 7.7Z" fill="#0062bd"/><path d="M0.8 10.2H3.6L4.4 11.7L3.6 13.3H0.8Z" fill="none" stroke="#0062bd" stroke-width="1"/><path d="M9.9 10.2H12.7L13.5 11.7L12.7 13.3H9.9Z" fill="none" stroke="#0062bd" stroke-width="1"/></svg>
<svg class="a" style="left:100px;top:542.1px;" width="14.1" height="3.6" viewBox="0 0 14.1 3.6"><rect x="0.6" y="0.6" width="2.4000000000000004" height="2.4000000000000004" fill="none" stroke="#0062bd" stroke-width="1.0"/><rect x="5.85" y="0.6" width="2.4000000000000004" height="2.4000000000000004" fill="none" stroke="#0062bd" stroke-width="1.0"/><rect x="11.1" y="0.6" width="2.4000000000000004" height="2.4000000000000004" fill="none" stroke="#0062bd" stroke-width="1.0"/></svg>
<svg class="a" style="left:125.9px;top:537px;" width="13" height="14" viewBox="0 0 13 14"><path d="M6.4 0.5L12.1 3.7V10.2L6.3 13.3L0.5 10.1V3.7Z M0.5 3.7L6.3 7.1L12.1 3.7" fill="none" stroke="#0062bd" stroke-width="0.9" stroke-linejoin="round"/></svg>
<svg class="a" style="left:151px;top:538.6px;" width="12.6" height="11.3" viewBox="0 0 12.6 11.3"><rect x="0.5" y="0.8" width="11.6" height="10" rx="0.6" fill="none" stroke="#0062bd" stroke-width="0.9"/><path d="M0.5 1.2H12.1" stroke="#0062bd" stroke-width="1.4"/><path d="M2.3 3.7L4.3 5.5L2.3 7.3" fill="none" stroke="#0062bd" stroke-width="0.75"/><path d="M5.3 7.7H8.6" stroke="#0062bd" stroke-width="0.9"/></svg>
<div class="t" style="top:538.00px;font-size:11.26px;line-height:13.51px;font-weight:400;color:#343741;-webkit-text-stroke:0.25px #343741;letter-spacing:0.319px;left:178.90px;">Mar 5, 2024 @ 22:43:20.008</div>
<div class="t" style="top:538.00px;font-size:11.3px;line-height:13.56px;font-weight:400;color:#0062bd;-webkit-text-stroke:0.25px #0062bd;letter-spacing:0.33px;left:358.80px;">Match All</div>
<div class="t" style="top:537.00px;font-size:11.768px;line-height:14.12px;font-weight:400;color:#69707d;-webkit-text-stroke:0.25px #69707d;left:472.86px;">High</div>
<div class="t" style="top:538.00px;font-size:11.26px;line-height:13.51px;font-weight:400;color:#343741;-webkit-text-stroke:0.25px #343741;letter-spacing:0.654px;left:-165.34px;width:1000px;text-align:right;">89.657906</div>
<div class="a" style="left:846px;top:538px;width:78.9px;height:17.8px;background:#d6bf57;border-radius:3px;"></div>
<div class="t" style="top:539.00px;font-size:11.642px;line-height:13.97px;font-weight:400;color:#000;-webkit-text-stroke:0.25px #000;left:854.10px;">high_impact</div>
<div class="t" style="top:538.00px;font-size:11.3px;line-height:13.56px;font-weight:400;color:#343741;-webkit-text-stroke:0.25px #343741;letter-spacing:0.105px;left:999.62px;">malware event with process malware writer, file fake_malware.exe, by 5q4...</div>
<div class="a" style="left:16.2px;top:562.1px;width:14.5px;height:14.5px;background:#fff;border:1px solid #8c919b;box-sizing:border-box;border-radius:3px;"></div>
<svg class="a" style="left:50.5px;top:562.5px;" width="14" height="14" viewBox="0 0 14 14"><path d="M3 10.2L10.7 2.5" fill="none" stroke="#0062bd" stroke-width="0.85"/><path d="M8.8 0.55H13.2V4M0.8 8.5V13H4.1" fill="none" stroke="#0062bd" stroke-width="1"/></svg>
<svg class="a" style="left:74.8px;top:562px;" width="14" height="14" viewBox="0 0 14 14"><rect x="5" y="0.5" width="3.6" height="2.7" rx="0.6" fill="none" stroke="#0062bd" stroke-width="1"/><path d="M6.8 3.4V6.5M0.3 6.5H13.3" stroke="#0062bd" stroke-width="0.85"/><path d="M1.2 6.5L2.5 5.3L3.8 6.5L2.5 7.7Z" fill="#0062bd"/><path d="M5.5 6.5L6.8 5.3L8.1 6.5L6.8 7.7Z" fill="#0062bd"/><path d="M10.1 6.5L11.4 5.3L12.700000000000001 6.5L11.4 7.7Z" fill="#0062bd"/><path d="M0.8 10.2H3.6L4.4 11.7L3.6 13.3H0.8Z" fill="none" stroke="#0062bd" stroke-width="1"/><path d="M9.9 10.2H12.7L13.5 11.7L12.7 13.3H9.9Z" fill="none" stroke="#0062bd" stroke-width="1"/></svg>
<svg class="a" style="left:100px;top:567.1px;" width="14.1" height="3.6" viewBox="0 0 14.1 3.6"><rect x="0.6" y="0.6" width="2.4000000000000004" height="2.4000000000000004" fill="none" stroke="#0062bd" stroke-width="1.0"/><rect x="5.85" y="0.6" width="2.4000000000000004" height="2.4000000000000004" fill="none" stroke="#0062bd" stroke-width="1.0"/><rect x="11.1" y="0.6" width="2.4000000000000004" height="2.4000000000000004" fill="none" stroke="#0062bd" stroke-width="1.0"/></svg>
<svg class="a" style="left:125.9px;top:562px;" width="13" height="14" viewBox="0 0 13 14"><path d="M6.4 0.5L12.1 3.7V10.2L6.3 13.3L0.5 10.1V3.7Z M0.5 3.7L6.3 7.1L12.1 3.7" fill="none" stroke="#0062bd" stroke-width="0.9" stroke-linejoin="round"/></svg>
<svg class="a" style="left:151px;top:563.6px;" width="12.6" height="11.3" viewBox="0 0 12.6 11.3"><rect x="0.5" y="0.8" width="11.6" height="10" rx="0.6" fill="none" stroke="#0062bd" stroke-width="0.9"/><path d="M0.5 1.2H12.1" stroke="#0062bd" stroke-width="1.4"/><path d="M2.3 3.7L4.3 5.5L2.3 7.3" fill="none" stroke="#0062bd" stroke-width="0.75"/><path d="M5.3 7.7H8.6" stroke="#0062bd" stroke-width="0.9"/></svg>
<div class="t" style="top:563.00px;font-size:11.26px;line-height:13.51px;font-weight:400;color:#343741;-webkit-text-stroke:0.25px #343741;letter-spacing:0.315px;left:178.90px;">Mar 5, 2024 @ 22:43:19.944</div>
<div class="t" style="top:563.00px;font-size:11.3px;line-height:13.56px;font-weight:400;color:#0062bd;-webkit-text-stroke:0.25px #0062bd;letter-spacing:0.33px;left:358.80px;">Match All</div>
<div class="t" style="top:562.00px;font-size:11.768px;line-height:14.12px;font-weight:400;color:#69707d;-webkit-text-stroke:0.25px #69707d;left:472.86px;">High</div>
<div class="t" style="top:563.00px;font-size:11.26px;line-height:13.51px;font-weight:400;color:#343741;-webkit-text-stroke:0.25px #343741;letter-spacing:0.654px;left:-165.34px;width:1000px;text-align:right;">89.657906</div>
<div class="a" style="left:846px;top:563px;width:78.9px;height:17.8px;background:#d6bf57;border-radius:3px;"></div>
<div class="t" style="top:564.00px;font-size:11.642px;line-height:13.97px;font-weight:400;color:#000;-webkit-text-stroke:0.25px #000;left:854.10px;">high_impact</div>
<div class="t" style="top:563.00px;font-size:11.3px;line-height:13.56px;font-weight:400;color:#343741;-webkit-text-stroke:0.25px #343741;letter-spacing:0.224px;left:999.62px;">registry event with process explorer.exe, by fp5nwj6qmv on Host-qtg8jc5y...</div>
<div class="a" style="left:16.2px;top:587.1px;width:14.5px;height:14.5px;background:#fff;border:1px solid #8c919b;box-sizing:border-box;border-radius:3px;"></div>
<svg class="a" style="left:50.5px;top:587.5px;" width="14" height="14" viewBox="0 0 14 14"><path d="M3 10.2L10.7 2.5" fill="none" stroke="#0062bd" stroke-width="0.85"/><path d="M8.8 0.55H13.2V4M0.8 8.5V13H4.1" fill="none" stroke="#0062bd" stroke-width="1"/></svg>
<svg class="a" style="left:74.8px;top:587px;" width="14" height="14" viewBox="0 0 14 14"><rect x="5" y="0.5" width="3.6" height="2.7" rx="0.6" fill="none" stroke="#0062bd" stroke-width="1"/><path d="M6.8 3.4V6.5M0.3 6.5H13.3" stroke="#0062bd" stroke-width="0.85"/><path d="M1.2 6.5L2.5 5.3L3.8 6.5L2.5 7.7Z" fill="#0062bd"/><path d="M5.5 6.5L6.8 5.3L8.1 6.5L6.8 7.7Z" fill="#0062bd"/><path d="M10.1 6.5L11.4 5.3L12.700000000000001 6.5L11.4 7.7Z" fill="#0062bd"/><path d="M0.8 10.2H3.6L4.4 11.7L3.6 13.3H0.8Z" fill="none" stroke="#0062bd" stroke-width="1"/><path d="M9.9 10.2H12.7L13.5 11.7L12.7 13.3H9.9Z" fill="none" stroke="#0062bd" stroke-width="1"/></svg>
<svg class="a" style="left:100px;top:592.1px;" width="14.1" height="3.6" viewBox="0 0 14.1 3.6"><rect x="0.6" y="0.6" width="2.4000000000000004" height="2.4000000000000004" fill="none" stroke="#0062bd" stroke-width="1.0"/><rect x="5.85" y="0.6" width="2.4000000000000004" height="2.4000000000000004" fill="none" stroke="#0062bd" stroke-width="1.0"/><rect x="11.1" y="0.6" width="2.4000000000000004" height="2.4000000000000004" fill="none" stroke="#0062bd" stroke-width="1.0"/></svg>
<svg class="a" style="left:125.9px;top:587px;" width="13" height="14" viewBox="0 0 13 14"><path d="M6.4 0.5L12.1 3.7V10.2L6.3 13.3L0.5 10.1V3.7Z M0.5 3.7L6.3 7.1L12.1 3.7" fill="none" stroke="#0062bd" stroke-width="0.9" stroke-linejoin="round"/></svg>
<svg class="a" style="left:151px;top:588.6px;" width="12.6" height="11.3" viewBox="0 0 12.6 11.3"><rect x="0.5" y="0.8" width="11.6" height="10" rx="0.6" fill="none" stroke="#0062bd" stroke-width="0.9"/><path d="M0.5 1.2H12.1" stroke="#0062bd" stroke-width="1.4"/><path d="M2.3 3.7L4.3 5.5L2.3 7.3" fill="none" stroke="#0062bd" stroke-width="0.75"/><path d="M5.3 7.7H8.6" stroke="#0062bd" stroke-width="0.9"/></svg>
<div class="t" style="top:588.00px;font-size:11.26px;line-height:13.51px;font-weight:400;color:#343741;-webkit-text-stroke:0.25px #343741;letter-spacing:0.324px;left:178.90px;">Mar 5, 2024 @ 22:38:17.219</div>
<div class="t" style="top:588.00px;font-size:11.3px;line-height:13.56px;font-weight:400;color:#0062bd;-webkit-text-stroke:0.25px #0062bd;letter-spacing:0.33px;left:358.80px;">Match All</div>
<div class="t" style="top:587.00px;font-size:11.768px;line-height:14.12px;font-weight:400;color:#69707d;-webkit-text-stroke:0.25px #69707d;left:472.86px;">High</div>
<div class="t" style="top:588.00px;font-size:11.26px;line-height:13.51px;font-weight:400;color:#343741;-webkit-text-stroke:0.25px #343741;letter-spacing:0.654px;left:-165.34px;width:1000px;text-align:right;">89.657906</div>
<div class="a" style="left:846px;top:588px;width:78.9px;height:17.8px;background:#d6bf57;border-radius:3px;"></div>
<div class="t" style="top:589.00px;font-size:11.642px;line-height:13.97px;font-weight:400;color:#000;-webkit-text-stroke:0.25px #000;left:854.10px;">high_impact</div>
<div class="t" style="top:588.00px;font-size:11.3px;line-height:13.56px;font-weight:400;color:#343741;-webkit-text-stroke:0.25px #343741;letter-spacing:0.105px;left:999.62px;">malware event with process malware writer, file fake_malware.exe, by 3u9...</div>
<div class="a" style="left:16.2px;top:613.1px;width:14.5px;height:14.5px;background:#fff;border:1px solid #8c919b;box-sizing:border-box;border-radius:3px;"></div>
<svg class="a" style="left:50.5px;top:613.5px;" width="14" height="14" viewBox="0 0 14 14"><path d="M3 10.2L10.7 2.5" fill="none" stroke="#0062bd" stroke-width="0.85"/><path d="M8.8 0.55H13.2V4M0.8 8.5V13H4.1" fill="none" stroke="#0062bd" stroke-width="1"/></svg>
<svg class="a" style="left:74.8px;top:613px;" width="14" height="14" viewBox="0 0 14 14"><rect x="5" y="0.5" width="3.6" height="2.7" rx="0.6" fill="none" stroke="#0062bd" stroke-width="1"/><path d="M6.8 3.4V6.5M0.3 6.5H13.3" stroke="#0062bd" stroke-width="0.85"/><path d="M1.2 6.5L2.5 5.3L3.8 6.5L2.5 7.7Z" fill="#0062bd"/><path d="M5.5 6.5L6.8 5.3L8.1 6.5L6.8 7.7Z" fill="#0062bd"/><path d="M10.1 6.5L11.4 5.3L12.700000000000001 6.5L11.4 7.7Z" fill="#0062bd"/><path d="M0.8 10.2H3.6L4.4 11.7L3.6 13.3H0.8Z" fill="none" stroke="#0062bd" stroke-width="1"/><path d="M9.9 10.2H12.7L13.5 11.7L12.7 13.3H9.9Z" fill="none" stroke="#0062bd" stroke-width="1"/></svg>
<svg class="a" style="left:100px;top:618.1px;" width="14.1" height="3.6" viewBox="0 0 14.1 3.6"><rect x="0.6" y="0.6" width="2.4000000000000004" height="2.4000000000000004" fill="none" stroke="#0062bd" stroke-width="1.0"/><rect x="5.85" y="0.6" width="2.4000000000000004" height="2.4000000000000004" fill="none" stroke="#0062bd" stroke-width="1.0"/><rect x="11.1" y="0.6" width="2.4000000000000004" height="2.4000000000000004" fill="none" stroke="#0062bd" stroke-width="1.0"/></svg>
<svg class="a" style="left:125.9px;top:613px;" width="13" height="14" viewBox="0 0 13 14"><path d="M6.4 0.5L12.1 3.7V10.2L6.3 13.3L0.5 10.1V3.7Z M0.5 3.7L6.3 7.1L12.1 3.7" fill="none" stroke="#0062bd" stroke-width="0.9" stroke-linejoin="round"/></svg>
<div class="t" style="top:614.00px;font-size:11.26px;line-height:13.51px;font-weight:400;color:#343741;-webkit-text-stroke:0.25px #343741;letter-spacing:0.319px;left:178.90px;">Mar 5, 2024 @ 22:23:14.220</div>
<div class="t" style="top:614.00px;font-size:11.3px;line-height:13.56px;font-weight:400;color:#0062bd;-webkit-text-stroke:0.25px #0062bd;letter-spacing:0.33px;left:358.80px;">Match All</div>
<div class="t" style="top:613.00px;font-size:11.768px;line-height:14.12px;font-weight:400;color:#69707d;-webkit-text-stroke:0.25px #69707d;left:472.86px;">High</div>
<div class="t" style="top:614.00px;font-size:11.26px;line-height:13.51px;font-weight:400;color:#343741;-webkit-text-stroke:0.25px #343741;letter-spacing:0.654px;left:-165.34px;width:1000px;text-align:right;">89.657906</div>
<div class="a" style="left:846px;top:614px;width:78.9px;height:17.8px;background:#d6bf57;border-radius:3px;"></div>
<div class="t" style="top:615.00px;font-size:11.642px;line-height:13.97px;font-weight:400;color:#000;-webkit-text-stroke:0.25px #000;left:854.10px;">high_impact</div>
<div class="t" style="top:614.00px;font-size:11.3px;line-height:13.56px;font-weight:400;color:#343741;-webkit-text-stroke:0.25px #343741;letter-spacing:0.083px;left:999.62px;">behavior event with process mimikatz.exe, file fake_behavior.exe, source 1...</div>
<div class="a" style="left:16.2px;top:638.1px;width:14.5px;height:14.5px;background:#fff;border:1px solid #8c919b;box-sizing:border-box;border-radius:3px;"></div>
<svg class="a" style="left:50.5px;top:638.5px;" width="14" height="14" viewBox="0 0 14 14"><path d="M3 10.2L10.7 2.5" fill="none" stroke="#0062bd" stroke-width="0.85"/><path d="M8.8 0.55H13.2V4M0.8 8.5V13H4.1" fill="none" stroke="#0062bd" stroke-width="1"/></svg>
<svg class="a" style="left:74.8px;top:638px;" width="14" height="14" viewBox="0 0 14 14"><rect x="5" y="0.5" width="3.6" height="2.7" rx="0.6" fill="none" stroke="#0062bd" stroke-width="1"/><path d="M6.8 3.4V6.5M0.3 6.5H13.3" stroke="#0062bd" stroke-width="0.85"/><path d="M1.2 6.5L2.5 5.3L3.8 6.5L2.5 7.7Z" fill="#0062bd"/><path d="M5.5 6.5L6.8 5.3L8.1 6.5L6.8 7.7Z" fill="#0062bd"/><path d="M10.1 6.5L11.4 5.3L12.700000000000001 6.5L11.4 7.7Z" fill="#0062bd"/><path d="M0.8 10.2H3.6L4.4 11.7L3.6 13.3H0.8Z" fill="none" stroke="#0062bd" stroke-width="1"/><path d="M9.9 10.2H12.7L13.5 11.7L12.7 13.3H9.9Z" fill="none" stroke="#0062bd" stroke-width="1"/></svg>
<svg class="a" style="left:100px;top:643.1px;" width="14.1" height="3.6" viewBox="0 0 14.1 3.6"><rect x="0.6" y="0.6" width="2.4000000000000004" height="2.4000000000000004" fill="none" stroke="#0062bd" stroke-width="1.0"/><rect x="5.85" y="0.6" width="2.4000000000000004" height="2.4000000000000004" fill="none" stroke="#0062bd" stroke-width="1.0"/><rect x="11.1" y="0.6" width="2.4000000000000004" height="2.4000000000000004" fill="none" stroke="#0062bd" stroke-width="1.0"/></svg>
<svg class="a" style="left:125.9px;top:638px;" width="13" height="14" viewBox="0 0 13 14"><path d="M6.4 0.5L12.1 3.7V10.2L6.3 13.3L0.5 10.1V3.7Z M0.5 3.7L6.3 7.1L12.1 3.7" fill="none" stroke="#0062bd" stroke-width="0.9" stroke-linejoin="round"/></svg>
<svg class="a" style="left:151px;top:639.6px;" width="12.6" height="11.3" viewBox="0 0 12.6 11.3"><rect x="0.5" y="0.8" width="11.6" height="10" rx="0.6" fill="none" stroke="#0062bd" stroke-width="0.9"/><path d="M0.5 1.2H12.1" stroke="#0062bd" stroke-width="1.4"/><path d="M2.3 3.7L4.3 5.5L2.3 7.3" fill="none" stroke="#0062bd" stroke-width="0.75"/><path d="M5.3 7.7H8.6" stroke="#0062bd" stroke-width="0.9"/></svg>
<div class="t" style="top:639.00px;font-size:11.26px;line-height:13.51px;font-weight:400;color:#343741;-webkit-text-stroke:0.25px #343741;letter-spacing:0.324px;left:178.90px;">Mar 5, 2024 @ 22:18:13.902</div>
<div class="t" style="top:639.00px;font-size:11.3px;line-height:13.56px;font-weight:400;color:#0062bd;-webkit-text-stroke:0.25px #0062bd;letter-spacing:0.33px;left:358.80px;">Match All</div>
<div class="t" style="top:638.00px;font-size:11.768px;line-height:14.12px;font-weight:400;color:#69707d;-webkit-text-stroke:0.25px #69707d;left:472.86px;">High</div>
<div class="t" style="top:639.00px;font-size:11.26px;line-height:13.51px;font-weight:400;color:#343741;-webkit-text-stroke:0.25px #343741;letter-spacing:0.654px;left:-165.34px;width:1000px;text-align:right;">89.657906</div>
<div class="a" style="left:846px;top:639px;width:78.9px;height:17.8px;background:#d6bf57;border-radius:3px;"></div>
<div class="t" style="top:640.00px;font-size:11.642px;line-height:13.97px;font-weight:400;color:#000;-webkit-text-stroke:0.25px #000;left:854.10px;">high_impact</div>
<div class="t" style="top:639.00px;font-size:11.3px;line-height:13.56px;font-weight:400;color:#343741;-webkit-text-stroke:0.25px #343741;letter-spacing:0.147px;left:999.85px;">authentication, session event with process notepad.exe, by 374ozcenhd o...</div>
<div class="a" style="left:16.2px;top:663.1px;width:14.5px;height:14.5px;background:#fff;border:1px solid #8c919b;box-sizing:border-box;border-radius:3px;"></div>
<svg class="a" style="left:50.5px;top:663.5px;" width="14" height="14" viewBox="0 0 14 14"><path d="M3 10.2L10.7 2.5" fill="none" stroke="#0062bd" stroke-width="0.85"/><path d="M8.8 0.55H13.2V4M0.8 8.5V13H4.1" fill="none" stroke="#0062bd" stroke-width="1"/></svg>
<svg class="a" style="left:74.8px;top:663px;" width="14" height="14" viewBox="0 0 14 14"><rect x="5" y="0.5" width="3.6" height="2.7" rx="0.6" fill="none" stroke="#0062bd" stroke-width="1"/><path d="M6.8 3.4V6.5M0.3 6.5H13.3" stroke="#0062bd" stroke-width="0.85"/><path d="M1.2 6.5L2.5 5.3L3.8 6.5L2.5 7.7Z" fill="#0062bd"/><path d="M5.5 6.5L6.8 5.3L8.1 6.5L6.8 7.7Z" fill="#0062bd"/><path d="M10.1 6.5L11.4 5.3L12.700000000000001 6.5L11.4 7.7Z" fill="#0062bd"/><path d="M0.8 10.2H3.6L4.4 11.7L3.6 13.3H0.8Z" fill="none" stroke="#0062bd" stroke-width="1"/><path d="M9.9 10.2H12.7L13.5 11.7L12.7 13.3H9.9Z" fill="none" stroke="#0062bd" stroke-width="1"/></svg>
<svg class="a" style="left:100px;top:668.1px;" width="14.1" height="3.6" viewBox="0 0 14.1 3.6"><rect x="0.6" y="0.6" width="2.4000000000000004" height="2.4000000000000004" fill="none" stroke="#0062bd" stroke-width="1.0"/><rect x="5.85" y="0.6" width="2.4000000000000004" height="2.4000000000000004" fill="none" stroke="#0062bd" stroke-width="1.0"/><rect x="11.1" y="0.6" width="2.4000000000000004" height="2.4000000000000004" fill="none" stroke="#0062bd" stroke-width="1.0"/></svg>
<svg class="a" style="left:125.9px;top:663px;" width="13" height="14" viewBox="0 0 13 14"><path d="M6.4 0.5L12.1 3.7V10.2L6.3 13.3L0.5 10.1V3.7Z M0.5 3.7L6.3 7.1L12.1 3.7" fill="none" stroke="#0062bd" stroke-width="0.9" stroke-linejoin="round"/></svg>
<svg class="a" style="left:151px;top:664.6px;" width="12.6" height="11.3" viewBox="0 0 12.6 11.3"><rect x="0.5" y="0.8" width="11.6" height="10" rx="0.6" fill="none" stroke="#0062bd" stroke-width="0.9"/><path d="M0.5 1.2H12.1" stroke="#0062bd" stroke-width="1.4"/><path d="M2.3 3.7L4.3 5.5L2.3 7.3" fill="none" stroke="#0062bd" stroke-width="0.75"/><path d="M5.3 7.7H8.6" stroke="#0062bd" stroke-width="0.9"/></svg>
<div class="t" style="top:664.00px;font-size:11.26px;line-height:13.51px;font-weight:400;color:#343741;-webkit-text-stroke:0.25px #343741;letter-spacing:0.324px;left:178.90px;">Mar 5, 2024 @ 22:08:13.557</div>
<div class="t" style="top:664.00px;font-size:11.3px;line-height:13.56px;font-weight:400;color:#0062bd;-webkit-text-stroke:0.25px #0062bd;letter-spacing:0.33px;left:358.80px;">Match All</div>
<div class="t" style="top:663.00px;font-size:11.768px;line-height:14.12px;font-weight:400;color:#69707d;-webkit-text-stroke:0.25px #69707d;left:472.86px;">High</div>
<div class="t" style="top:664.00px;font-size:11.26px;line-height:13.51px;font-weight:400;color:#343741;-webkit-text-stroke:0.25px #343741;letter-spacing:0.654px;left:-165.34px;width:1000px;text-align:right;">89.657906</div>
<div class="a" style="left:846px;top:664px;width:78.9px;height:17.8px;background:#d6bf57;border-radius:3px;"></div>
<div class="t" style="top:665.00px;font-size:11.642px;line-height:13.97px;font-weight:400;color:#000;-webkit-text-stroke:0.25px #000;left:854.10px;">high_impact</div>
<div class="t" style="top:664.00px;font-size:11.3px;line-height:13.56px;font-weight:400;color:#343741;-webkit-text-stroke:0.25px #343741;letter-spacing:0.185px;left:1000.19px;">file event with process iexlorer.exe, by shdf0gym1y on Host-qtg8jc5yzl cre...</div>
<div class="a" style="left:16.2px;top:688.1px;width:14.5px;height:14.5px;background:#fff;border:1px solid #8c919b;box-sizing:border-box;border-radius:3px;"></div>
<svg class="a" style="left:50.5px;top:688.5px;" width="14" height="14" viewBox="0 0 14 14"><path d="M3 10.2L10.7 2.5" fill="none" stroke="#0062bd" stroke-width="0.85"/><path d="M8.8 0.55H13.2V4M0.8 8.5V13H4.1" fill="none" stroke="#0062bd" stroke-width="1"/></svg>
<svg class="a" style="left:74.8px;top:688px;" width="14" height="14" viewBox="0 0 14 14"><rect x="5" y="0.5" width="3.6" height="2.7" rx="0.6" fill="none" stroke="#0062bd" stroke-width="1"/><path d="M6.8 3.4V6.5M0.3 6.5H13.3" stroke="#0062bd" stroke-width="0.85"/><path d="M1.2 6.5L2.5 5.3L3.8 6.5L2.5 7.7Z" fill="#0062bd"/><path d="M5.5 6.5L6.8 5.3L8.1 6.5L6.8 7.7Z" fill="#0062bd"/><path d="M10.1 6.5L11.4 5.3L12.700000000000001 6.5L11.4 7.7Z" fill="#0062bd"/><path d="M0.8 10.2H3.6L4.4 11.7L3.6 13.3H0.8Z" fill="none" stroke="#0062bd" stroke-width="1"/><path d="M9.9 10.2H12.7L13.5 11.7L12.7 13.3H9.9Z" fill="none" stroke="#0062bd" stroke-width="1"/></svg>
<svg class="a" style="left:100px;top:693.1px;" width="14.1" height="3.6" viewBox="0 0 14.1 3.6"><rect x="0.6" y="0.6" width="2.4000000000000004" height="2.4000000000000004" fill="none" stroke="#0062bd" stroke-width="1.0"/><rect x="5.85" y="0.6" width="2.4000000000000004" height="2.4000000000000004" fill="none" stroke="#0062bd" stroke-width="1.0"/><rect x="11.1" y="0.6" width="2.4000000000000004" height="2.4000000000000004" fill="none" stroke="#0062bd" stroke-width="1.0"/></svg>
<svg class="a" style="left:125.9px;top:688px;" width="13" height="14" viewBox="0 0 13 14"><path d="M6.4 0.5L12.1 3.7V10.2L6.3 13.3L0.5 10.1V3.7Z M0.5 3.7L6.3 7.1L12.1 3.7" fill="none" stroke="#0062bd" stroke-width="0.9" stroke-linejoin="round"/></svg>
<div class="t" style="top:689.00px;font-size:11.26px;line-height:13.51px;font-weight:400;color:#343741;-webkit-text-stroke:0.25px #343741;letter-spacing:0.315px;left:178.90px;">Mar 5, 2024 @ 22:08:13.554</div>
<div class="t" style="top:689.00px;font-size:11.3px;line-height:13.56px;font-weight:400;color:#0062bd;-webkit-text-stroke:0.25px #0062bd;letter-spacing:0.33px;left:358.80px;">Match All</div>
<div class="t" style="top:688.00px;font-size:11.768px;line-height:14.12px;font-weight:400;color:#69707d;-webkit-text-stroke:0.25px #69707d;left:472.86px;">High</div>
<div class="t" style="top:689.00px;font-size:11.26px;line-height:13.51px;font-weight:400;color:#343741;-webkit-text-stroke:0.25px #343741;letter-spacing:0.654px;left:-165.34px;width:1000px;text-align:right;">89.657906</div>
<div class="a" style="left:846px;top:689px;width:78.9px;height:17.8px;background:#d6bf57;border-radius:3px;"></div>
<div class="t" style="top:690.00px;font-size:11.642px;line-height:13.97px;font-weight:400;color:#000;-webkit-text-stroke:0.25px #000;left:854.10px;">high_impact</div>
<div class="t" style="top:689.00px;font-size:11.3px;line-height:13.56px;font-weight:400;color:#343741;-webkit-text-stroke:0.25px #343741;letter-spacing:0.093px;left:999.62px;">behavior event with process notepad.exe, file fake_behavior.exe, source 10...</div>
<div class="a" style="left:16.2px;top:713.1px;width:14.5px;height:14.5px;background:#fff;border:1px solid #8c919b;box-sizing:border-box;border-radius:3px;"></div>
<svg class="a" style="left:50.5px;top:713.5px;" width="14" height="14" viewBox="0 0 14 14"><path d="M3 10.2L10.7 2.5" fill="none" stroke="#0062bd" stroke-width="0.85"/><path d="M8.8 0.55H13.2V4M0.8 8.5V13H4.1" fill="none" stroke="#0062bd" stroke-width="1"/></svg>
<svg class="a" style="left:74.8px;top:713px;" width="14" height="14" viewBox="0 0 14 14"><rect x="5" y="0.5" width="3.6" height="2.7" rx="0.6" fill="none" stroke="#0062bd" stroke-width="1"/><path d="M6.8 3.4V6.5M0.3 6.5H13.3" stroke="#0062bd" stroke-width="0.85"/><path d="M1.2 6.5L2.5 5.3L3.8 6.5L2.5 7.7Z" fill="#0062bd"/><path d="M5.5 6.5L6.8 5.3L8.1 6.5L6.8 7.7Z" fill="#0062bd"/><path d="M10.1 6.5L11.4 5.3L12.700000000000001 6.5L11.4 7.7Z" fill="#0062bd"/><path d="M0.8 10.2H3.6L4.4 11.7L3.6 13.3H0.8Z" fill="none" stroke="#0062bd" stroke-width="1"/><path d="M9.9 10.2H12.7L13.5 11.7L12.7 13.3H9.9Z" fill="none" stroke="#0062bd" stroke-width="1"/></svg>
<svg class="a" style="left:100px;top:718.1px;" width="14.1" height="3.6" viewBox="0 0 14.1 3.6"><rect x="0.6" y="0.6" width="2.4000000000000004" height="2.4000000000000004" fill="none" stroke="#0062bd" stroke-width="1.0"/><rect x="5.85" y="0.6" width="2.4000000000000004" height="2.4000000000000004" fill="none" stroke="#0062bd" stroke-width="1.0"/><rect x="11.1" y="0.6" width="2.4000000000000004" height="2.4000000000000004" fill="none" stroke="#0062bd" stroke-width="1.0"/></svg>
<svg class="a" style="left:125.9px;top:713px;" width="13" height="14" viewBox="0 0 13 14"><path d="M6.4 0.5L12.1 3.7V10.2L6.3 13.3L0.5 10.1V3.7Z M0.5 3.7L6.3 7.1L12.1 3.7" fill="none" stroke="#0062bd" stroke-width="0.9" stroke-linejoin="round"/></svg>
<svg class="a" style="left:151px;top:714.6px;" width="12.6" height="11.3" viewBox="0 0 12.6 11.3"><rect x="0.5" y="0.8" width="11.6" height="10" rx="0.6" fill="none" stroke="#0062bd" stroke-width="0.9"/><path d="M0.5 1.2H12.1" stroke="#0062bd" stroke-width="1.4"/><path d="M2.3 3.7L4.3 5.5L2.3 7.3" fill="none" stroke="#0062bd" stroke-width="0.75"/><path d="M5.3 7.7H8.6" stroke="#0062bd" stroke-width="0.9"/></svg>
<div class="t" style="top:714.00px;font-size:11.26px;line-height:13.51px;font-weight:400;color:#343741;-webkit-text-stroke:0.25px #343741;letter-spacing:0.324px;left:178.90px;">Mar 5, 2024 @ 22:08:13.552</div>
<div class="t" style="top:714.00px;font-size:11.3px;line-height:13.56px;font-weight:400;color:#0062bd;-webkit-text-stroke:0.25px #0062bd;letter-spacing:0.33px;left:358.80px;">Match All</div>
<div class="t" style="top:713.00px;font-size:11.768px;line-height:14.12px;font-weight:400;color:#69707d;-webkit-text-stroke:0.25px #69707d;left:472.86px;">High</div>
<div class="t" style="top:714.00px;font-size:11.26px;line-height:13.51px;font-weight:400;color:#343741;-webkit-text-stroke:0.25px #343741;letter-spacing:0.654px;left:-165.34px;width:1000px;text-align:right;">89.657906</div>
<div class="a" style="left:846px;top:714px;width:78.9px;height:17.8px;background:#d6bf57;border-radius:3px;"></div>
<div class="t" style="top:715.00px;font-size:11.642px;line-height:13.97px;font-weight:400;color:#000;-webkit-text-stroke:0.25px #000;left:854.10px;">high_impact</div>
<div class="t" style="top:714.00px;font-size:11.3px;line-height:13.56px;font-weight:400;color:#343741;-webkit-text-stroke:0.25px #343741;letter-spacing:0.208px;left:999.62px;">network event with process explorer.exe, by eq1jjuo98a on Host-qtg8jc5y...</div>
<div class="a" style="left:675px;top:5.3px;width:339.79999999999995px;height:47.400000000000006px;border:3.2px solid #f5417d;box-sizing:border-box;filter:drop-shadow(0 2.5px 1.3px rgba(0,0,0,0.72));"></div>
<div class="a" style="left:451.3px;top:450.2px;width:179.7px;height:283.8px;border:3.2px solid #f5417d;box-sizing:border-box;filter:drop-shadow(0 2.5px 1.3px rgba(0,0,0,0.72));"></div>
</body></html>
